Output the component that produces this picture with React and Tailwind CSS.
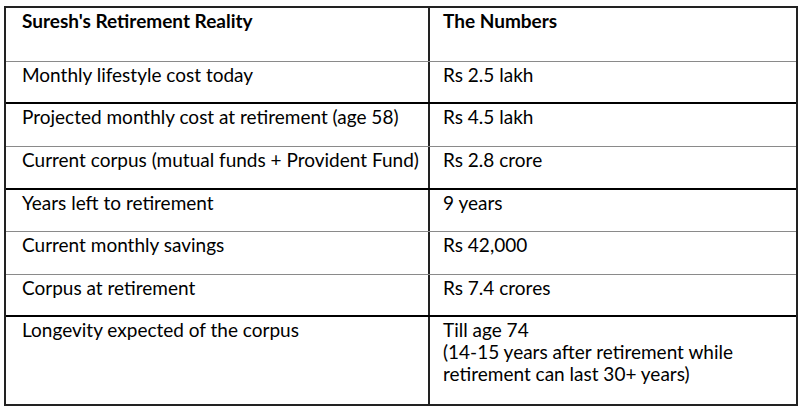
import React from "react";

const rows = [
  { label: "Monthly lifestyle cost today", value: ["Rs 2.5 lakh"], h: "h-[42px]", line: "border-b-[2px] border-b-black" },
  { label: "Projected monthly cost at retirement (age 58)", value: ["Rs 4.5 lakh"], h: "h-[43px]", line: "border-b-[1px] border-b-[#8a8a8a]" },
  { label: "Current corpus (mutual funds + Provident Fund)", value: ["Rs 2.8 crore"], h: "h-[43px]", line: "border-b-[2px] border-b-black" },
  { label: "Years left to retirement", value: ["9 years"], h: "h-[42px]", line: "border-b-[1px] border-b-[#8a8a8a]" },
  { label: "Current monthly savings", value: ["Rs 42,000"], h: "h-[43px]", line: "border-b-[1px] border-b-[#8a8a8a]" },
  { label: "Corpus at retirement", value: ["Rs 7.4 crores"], h: "h-[42px]", line: "border-b-[2px] border-b-black" },
  {
    label: "Longevity expected of the corpus",
    value: ["Till age 74", "(14-15 years after retirement while", "retirement can last 30+ years)"],
    h: "h-[87px]",
    line: "",
  },
];

export default function App() {
  return (
    <div className="w-[801px] h-[407px] bg-white pt-[6px] pl-[4px]" style={{ fontFamily: "Lato, 'Open Sans', sans-serif" }}>
      <div className="w-[794px] border-2 border-[#222] text-[19px] leading-[22px] text-black">
        <div className="flex h-[54px] border-b border-b-[#8a8a8a]">
          <div className="w-[424px] shrink-0 border-r-2 border-r-[#222] pl-[16px] pt-[2px] font-bold">Suresh's Retirement Reality</div>
          <div className="flex-1 pl-[13px] pt-[2px] font-bold">The Numbers</div>
        </div>
        {rows.map((r, i) => (
          <div key={i} className={`flex ${r.h} ${r.line}`}>
            <div className="w-[424px] shrink-0 border-r-2 border-r-[#222] pl-[16px] pt-[2px]">{r.label}</div>
            <div className="flex-1 pl-[13px] pt-[2px]">
              {r.value.map((v, j) => (
                <div key={j}>{v}</div>
              ))}
            </div>
          </div>
        ))}
      </div>
    </div>
  );
}
